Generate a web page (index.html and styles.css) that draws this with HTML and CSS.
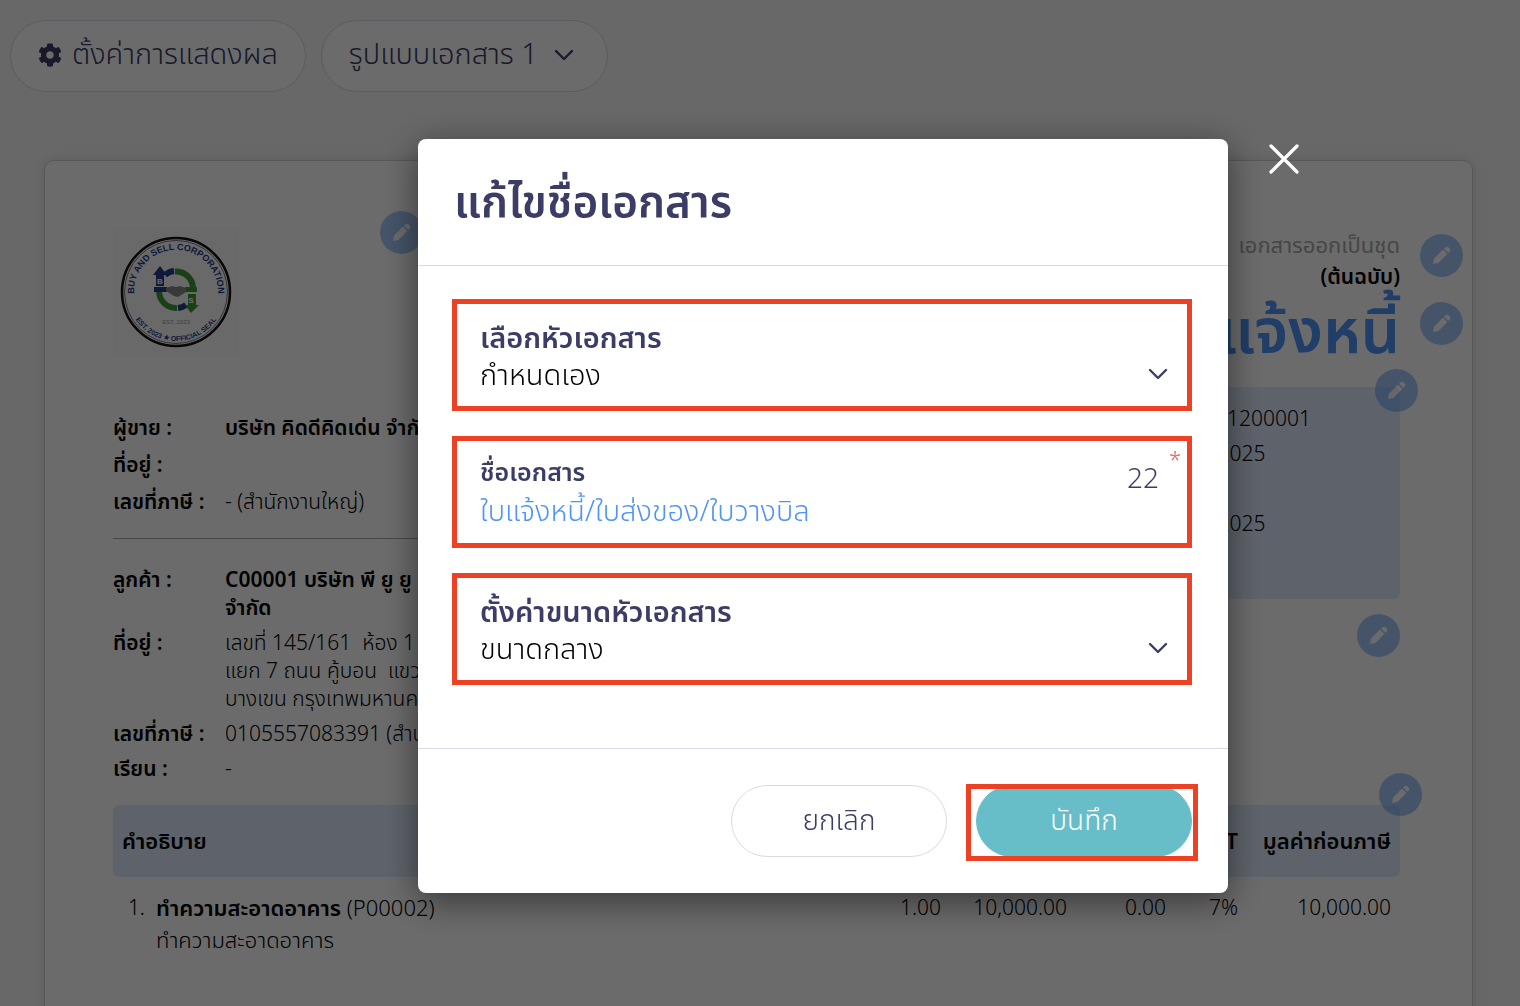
FILE: index.html
```html
<!DOCTYPE html>
<html lang="th">
<head>
    <meta charset="UTF-8">
    <meta name="viewport" content="width=device-width, initial-scale=1.0">
    <title>แก้ไขชื่อเอกสาร</title>
    <link rel="stylesheet" href="styles.css">
</head>
<body>
    <svg class="sprite" aria-hidden="true">
        <symbol id="pencil" viewBox="0 0 20 20">
            <path d="M1 19l1.200-5.800L11.600 3.800l4.600 4.600L6.800 17.800z"/>
            <path d="M12.700 2.700l1.500-1.400c.9-.8 2.300-.8 3.200.1l1.200 1.200c.9.9.9 2.300.1 3.200l-1.400 1.500z"/>
        </symbol>
        <symbol id="chevron" viewBox="0 0 20 12">
            <path d="M2 2l8 8 8-8" fill="none" stroke="currentColor" stroke-width="2.400" stroke-linecap="round" stroke-linejoin="round"/>
        </symbol>
    </svg>

    <header class="toolbar">
        <button class="pill" type="button">
            <svg class="gear" viewBox="0 0 512 512"><path fill="currentColor" d="M487.400 315.700l-42.600-24.600c4.300-23.200 4.300-47 0-70.200l42.600-24.600c4.900-2.800 7.100-8.600 5.500-14-11.100-35.600-30-67.800-54.700-94.600-3.800-4.100-10-5.100-14.800-2.300L380.800 110c-17.900-15.400-38.500-27.300-60.800-35.100V25.800c0-5.600-3.900-10.500-9.400-11.700-36.700-8.200-74.300-7.800-109.200 0-5.500 1.200-9.400 6.100-9.400 11.700V75c-22.200 7.900-42.800 19.800-60.800 35.100L88.700 85.500c-4.900-2.800-11-1.900-14.800 2.300-24.700 26.700-43.600 58.900-54.700 94.600-1.700 5.400.6 11.200 5.500 14L67.300 221c-4.300 23.200-4.300 47 0 70.200l-42.600 24.600c-4.900 2.800-7.100 8.600-5.500 14 11.100 35.600 30 67.800 54.700 94.600 3.800 4.100 10 5.100 14.800 2.300l42.600-24.600c17.900 15.400 38.500 27.300 60.800 35.100v49.200c0 5.600 3.900 10.500 9.400 11.700 36.700 8.200 74.300 7.800 109.200 0 5.500-1.200 9.400-6.100 9.400-11.700v-49.200c22.200-7.900 42.800-19.800 60.800-35.100l42.600 24.600c4.900 2.800 11 1.900 14.800-2.300 24.700-26.700 43.600-58.900 54.700-94.600 1.500-5.500-.7-11.300-5.600-14.100zM256 336c-44.100 0-80-35.900-80-80s35.900-80 80-80 80 35.900 80 80-35.900 80-80 80z"/></svg>
            ตั้งค่าการแสดงผล
        </button>
        <button class="pill" type="button">
            รูปแบบเอกสาร 1
            <svg class="chevron"><use href="#chevron"/></svg>
        </button>
    </header>

    <main class="paper">
        <div class="top">
            <section class="parties">
                <svg class="logo" viewBox="0 0 126 126" role="img" aria-label="Buy and Sell Corporation">
                    <defs>
                        <path id="arc-top" d="M22.500 74A42 42 0 1 1 103.500 74"/>
                        <path id="arc-bottom" d="M14 63a49 49 0 0 0 98 0"/>
                    </defs>
                    <rect width="126" height="126" fill="#fafafa"/>
                    <circle cx="63" cy="63" r="54" fill="none" stroke="#111" stroke-width="2.500"/>
                    <circle cx="63" cy="63" r="51.500" fill="none" stroke="#777" stroke-width="1"/>
                    <text class="seal-name"><textPath href="#arc-top" startOffset="50%">BUY AND SELL CORPORATION</textPath></text>
                    <text class="seal-small"><textPath href="#arc-bottom" startOffset="50%">EST. 2023 ★ OFFICIAL SEAL</textPath></text>
                    <g fill="none" stroke-width="6">
                        <path d="M52 46a17 17 0 0 1 9-4" stroke="#253f8e"/>
                        <path d="M62 42.500a17 17 0 0 1 18 16" stroke="#3f9a35"/>
                        <path d="M46 62a17 17 0 0 0 18 17" stroke="#3f9a35"/>
                        <path d="M65 79a17 17 0 0 0 8-3" stroke="#253f8e"/>
                    </g>
                    <path d="M47 37l7 9h-3v11h-8V46h-3zM41 58h13v5H41z" fill="#253f8e"/>
                    <path d="M78 84l-6-8h3V65h8v11h3zM72 58h12v5H72z" fill="#3f9a35"/>
                    <path d="M53 59l6-2 4 1 4-1 6 2v4l-8 5-4-1-8-5z" fill="#888"/>
                    <text class="seal-mark" x="47" y="55">B</text>
                    <text class="seal-mark" x="78" y="74">S</text>
                    <text class="seal-est" x="63" y="95">EST. 2023</text>
                </svg>
                <button class="edit edit-logo" type="button" aria-label="แก้ไขโลโก้"><svg><use href="#pencil"/></svg></button>

                <dl class="info">
                    <dt>ผู้ขาย :</dt><dd class="strong">บริษัท คิดดีคิดเด่น จำกัด</dd>
                    <dt>ที่อยู่ :</dt><dd></dd>
                    <dt>เลขที่ภาษี :</dt><dd>- (สำนักงานใหญ่)</dd>
                </dl>
                <hr>
                <dl class="info customer">
                    <dt>ลูกค้า :</dt><dd class="strong">C00001 บริษัท พี ยู ยู<br>จำกัด</dd>
                    <dt>ที่อยู่ :</dt><dd>เลขที่ 145/161&nbsp; ห้อง 1<br>แยก 7 ถนน คู้บอน&nbsp; แขวง<br>บางเขน กรุงเทพมหานคร</dd>
                    <dt>เลขที่ภาษี :</dt><dd>0105557083391 (สำนักงานใหญ่)</dd>
                    <dt>เรียน :</dt><dd>-</dd>
                </dl>
            </section>

            <section class="doc">
                <div class="copy">
                    <p class="set">เอกสารออกเป็นชุด</p>
                    <p class="original">(ต้นฉบับ)</p>
                    <button class="edit edit-copy" type="button" aria-label="แก้ไขชุดเอกสาร"><svg><use href="#pencil"/></svg></button>
                </div>
                <div class="doc-title">
                    <h1>ใบแจ้งหนี้</h1>
                    <button class="edit edit-title" type="button" aria-label="แก้ไขชื่อเอกสาร"><svg><use href="#pencil"/></svg></button>
                </div>
                <div class="numbers">
                    <p>BL20251200001</p>
                    <p>01/12/2025</p>
                    <p></p>
                    <p>31/12/2025</p>
                    <button class="edit edit-numbers" type="button" aria-label="แก้ไขเลขที่"><svg><use href="#pencil"/></svg></button>
                </div>
                <button class="edit edit-contact" type="button" aria-label="แก้ไขผู้ติดต่อ"><svg><use href="#pencil"/></svg></button>
            </section>
        </div>

        <div class="lines">
            <table>
                <thead>
                    <tr>
                        <th class="desc" colspan="2">คำอธิบาย</th>
                        <th class="qty">จำนวน</th>
                        <th class="price">ราคา</th>
                        <th class="discount">ส่วนลด</th>
                        <th class="vat">VAT</th>
                        <th class="total">มูลค่าก่อนภาษี</th>
                    </tr>
                </thead>
                <tbody>
                    <tr>
                        <td class="no">1.</td>
                        <td class="desc"><b>ทำความสะอาดอาคาร</b> (P00002)<br>ทำความสะอาดอาคาร</td>
                        <td>1.00</td>
                        <td>10,000.00</td>
                        <td>0.00</td>
                        <td>7%</td>
                        <td>10,000.00</td>
                    </tr>
                </tbody>
            </table>
            <button class="edit edit-lines" type="button" aria-label="แก้ไขรายการ"><svg><use href="#pencil"/></svg></button>
        </div>
    </main>

    <div class="overlay">
        <div class="modal" role="dialog" aria-modal="true" aria-labelledby="modal-title">
            <div class="modal-header">
                <h2 id="modal-title">แก้ไขชื่อเอกสาร</h2>
            </div>
            <form class="modal-body">
                <div class="field">
                    <label for="heading">เลือกหัวเอกสาร</label>
                    <select id="heading"><option>กำหนดเอง</option></select>
                    <svg class="chevron"><use href="#chevron"/></svg>
                </div>
                <div class="field field-name">
                    <label for="name">ชื่อเอกสาร</label>
                    <input id="name" type="text" value="ใบแจ้งหนี้/ใบส่งของ/ใบวางบิล">
                    <span class="count">22</span>
                    <span class="required">*</span>
                </div>
                <div class="field">
                    <label for="size">ตั้งค่าขนาดหัวเอกสาร</label>
                    <select id="size"><option>ขนาดกลาง</option></select>
                    <svg class="chevron"><use href="#chevron"/></svg>
                </div>
            </form>
            <div class="modal-footer">
                <button class="btn cancel" type="button">ยกเลิก</button>
                <div class="save-wrap">
                    <button class="btn save" type="button">บันทึก</button>
                </div>
            </div>
            <button class="close" type="button" aria-label="ปิด">
                <svg viewBox="0 0 32 32"><path d="M3 3l26 26M29 3L3 29" fill="none" stroke="currentColor" stroke-width="3.200" stroke-linecap="round"/></svg>
            </button>
        </div>
    </div>
</body>
</html>
```
FILE: styles.css
```css
* {
    box-sizing: border-box;
}
body {
    margin: 0;
    height: 100vh;
    overflow: hidden;
    background: #f8f8f8;
    color: #000;
    font-family: "Noto Sans", "Noto Sans Thai", sans-serif;
    font-size: 21px;
    font-weight: 350;
}
button, input, select {
    font: inherit;
    color: inherit;
}
h1, h2, p, dl, dd {
    margin: 0;
}
.sprite {
    position: absolute;
    width: 0;
    height: 0;
}
.chevron {
    width: 20px;
    height: 12px;
    color: #3c3d66;
}

/* toolbar */
.toolbar {
    display: flex;
    gap: 15px;
    padding: 20px 10px;
}
.pill {
    display: flex;
    align-items: center;
    gap: 10px;
    height: 72px;
    padding: 0 27px 2px;
    border: 1px solid #dadae6;
    border-radius: 36px;
    background: #fff;
    color: #3c3d66;
    font-size: 29px;
}
.gear {
    width: 24px;
    height: 24px;
}
.pill .chevron {
    margin: 0 6px;
}

/* document */
.paper {
    margin: 48px 47px 0 44px;
    padding: 50px 72px 80px 68px;
    border: 1px solid #d0d0d0;
    border-radius: 10px;
    background: #fff;
    box-shadow: 0 0 12px rgba(0, 0, 0, 0.12);
}
.top {
    display: flex;
    justify-content: space-between;
}
.parties {
    position: relative;
    width: 560px;
    padding-top: 18px;
}
.logo {
    display: block;
    width: 126px;
    height: 126px;
    margin-bottom: 58px;
}
.logo text {
    font-family: "Liberation Sans Narrow", "Liberation Sans", sans-serif;
    font-weight: bold;
    text-anchor: middle;
    fill: #253f8e;
}
.logo .seal-name {
    font-size: 9px;
}
.logo .seal-small {
    font-size: 7px;
}
.logo .seal-mark {
    font-size: 8px;
    fill: #fff;
}
.logo .seal-est {
    font-size: 6px;
    font-weight: normal;
    fill: #999;
}
.info {
    display: grid;
    grid-template-columns: 112px 1fr;
    row-gap: 9px;
    line-height: 28px;
}
.customer {
    row-gap: 7px;
}
.info dt, .strong {
    font-weight: 600;
}
.parties hr {
    margin: 23px 0 26px;
    border: 0;
    border-top: 1px solid #aaa;
}
.doc {
    position: relative;
    width: 480px;
    padding-top: 17px;
    text-align: right;
}
.copy, .doc-title, .numbers, .lines {
    position: relative;
}
.copy p {
    line-height: 32px;
}
.copy .set {
    color: #a8a8a8;
    font-size: 22px;
    font-weight: 400;
}
.original {
    font-weight: 600;
}
.doc-title h1 {
    padding-bottom: 21px;
    color: #4f94f7;
    font-size: 62px;
    font-weight: 600;
    line-height: 74px;
}
.numbers {
    height: 212px;
    padding: 14px 0 0 235px;
    border-radius: 6px;
    background: #e1ecff;
    text-align: left;
}
.numbers p {
    height: 35px;
    line-height: 35px;
}
.edit {
    position: absolute;
    display: flex;
    align-items: center;
    justify-content: center;
    width: 43px;
    height: 43px;
    padding: 0;
    border: 0;
    border-radius: 50%;
    background: #4f94f7;
    opacity: 0.5;
}
.edit svg {
    width: 19px;
    height: 19px;
    fill: #fff;
}
.edit-logo {
    top: 0;
    left: 267px;
}
.edit-copy, .edit-title {
    top: 6px;
    right: -63px;
}
.edit-title {
    top: 10px;
}
.edit-numbers {
    top: -18px;
    right: -18px;
}
.edit-contact {
    right: 0;
    bottom: 125px;
}
.edit-lines {
    top: -32px;
    right: -22px;
}
.lines {
    margin-top: 23px;
}
.lines table {
    width: 100%;
    border-spacing: 0;
    line-height: 32px;
}
.lines th {
    height: 72px;
    padding: 0 9px 2px;
    background: #e1ecff;
    font-size: 22px;
    font-weight: 600;
    text-align: right;
}
.lines td {
    padding: 14px 9px;
    text-align: right;
    vertical-align: top;
}
.lines .desc {
    font-size: 22px;
    text-align: left;
}
.lines th:first-child {
    border-radius: 6px 0 0 6px;
}
.lines th:last-child {
    border-radius: 0 6px 6px 0;
}
.lines .no {
    width: 43px;
    padding-right: 11px;
    padding-left: 0;
}
.lines td.desc {
    padding-left: 0;
}
.lines b {
    font-weight: 600;
}
.qty, .vat {
    width: 72px;
}
.price {
    width: 126px;
}
.discount {
    width: 99px;
}
.total {
    width: 153px;
}

/* modal */
.overlay {
    position: fixed;
    inset: 0;
    padding: 139px 0 0 126px;
    background: rgba(0, 0, 0, 0.58);
}
.modal {
    position: relative;
    width: 810px;
    margin: 0 auto;
    border-radius: 8px;
    background: #fff;
    color: #3c3d66;
    box-shadow: 0 8px 36px rgba(0, 0, 0, 0.5);
}
.modal-header {
    padding: 29px 36px 33px;
    border-bottom: 1px solid #dadae6;
}
.modal-header h2 {
    font-size: 44px;
    font-weight: 600;
    line-height: 64px;
}
.modal-body {
    display: grid;
    gap: 25px;
    padding: 33px 36px 63px 34px;
}
.field {
    position: relative;
    height: 112px;
    padding: 15px 23px;
    border: 5px solid #ec4125;
}
.field label {
    display: block;
    font-size: 29px;
    font-weight: 600;
    line-height: 36px;
}
.field select, .field input {
    display: block;
    width: 100%;
    height: 38px;
    padding: 0;
    border: 0;
    outline: 0;
    background: none;
    appearance: none;
    color: #000;
    font-size: 29px;
    line-height: 38px;
}
.field .chevron {
    position: absolute;
    right: 19px;
    bottom: 26px;
    pointer-events: none;
}
.field-name {
    padding-top: 12px;
}
.field-name label {
    font-size: 25px;
}
.field-name input {
    height: 46px;
    color: #4f94f7;
}
.count, .required {
    position: absolute;
    top: 20px;
    right: 28px;
    font-size: 28px;
    line-height: 32px;
}
.required {
    top: 6px;
    right: 6px;
    color: #ec5a3c;
    font-size: 22px;
    line-height: 22px;
}
.modal-footer {
    display: flex;
    justify-content: flex-end;
    gap: 29px;
    padding: 36px;
    border-top: 1px solid #dadae6;
}
.btn {
    display: block;
    width: 216px;
    height: 72px;
    border: 1px solid #dadae6;
    border-radius: 36px;
    background: #fff;
    font-size: 28px;
}
.save {
    border-color: #67bec9;
    background: #67bec9;
    color: #fff;
}
.save-wrap {
    position: relative;
}
.save-wrap::after {
    content: "";
    position: absolute;
    inset: -1px -6px -4px -10px;
    border: 5px solid #ec4125;
    pointer-events: none;
}
.close {
    position: absolute;
    top: 4px;
    right: -72px;
    width: 32px;
    height: 32px;
    padding: 0;
    border: 0;
    background: none;
    color: #fff;
}
```
